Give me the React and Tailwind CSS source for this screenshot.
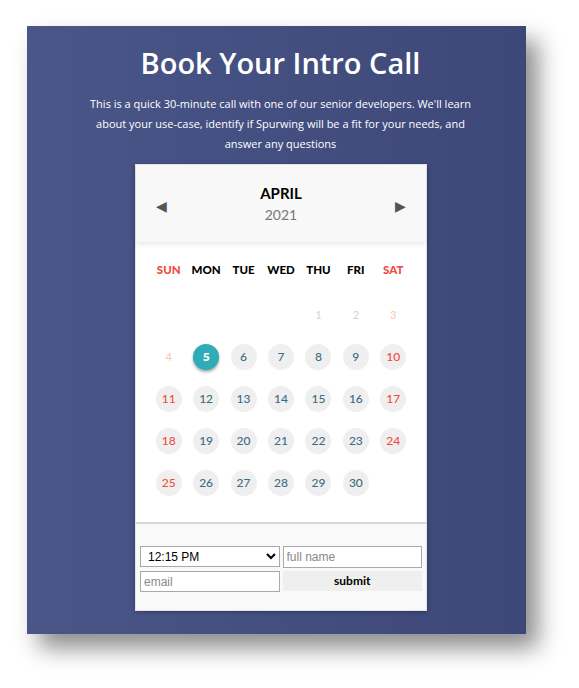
import React, { useState } from "react";

const days = ["SUN", "MON", "TUE", "WED", "THU", "FRI", "SAT"];

export default function App() {
  const [selected, setSelected] = useState(5);

  // April 2021 starts on Thursday
  const cells = [];
  for (let i = 0; i < 4; i++) cells.push(null);
  for (let d = 1; d <= 30; d++) cells.push(d);

  return (
    <div className="min-h-screen w-[579px] h-[688px] bg-white pt-[26px] pl-[27px]">
      <div className="w-[499px] h-[608px] bg-gradient-to-r from-[#4a5688] to-[#3d4878] shadow-[12px_14px_22px_rgba(0,0,0,0.45)] flex flex-col items-center pt-[20px] pl-[8px]">
        <h1 className="font-['Open_Sans',sans-serif] font-semibold text-[29px] leading-[34px] text-white">
          Book Your Intro Call
        </h1>
        <p className="mt-[14px] w-[390px] text-center font-['Open_Sans',sans-serif] text-[11px] leading-[20px] text-white">
          This is a quick 30-minute call with one of our senior developers. We'll learn about your use-case, identify if Spurwing will be a fit for your needs, and answer any questions
        </p>

        <div className="mt-[10px] ml-[1px] w-[292px] h-[447px] bg-white border border-[#e4e4e4] shadow-[0_1px_4px_rgba(0,0,0,0.3)] flex flex-col font-['Lato',sans-serif]">
          <div className="h-[77px] bg-[#f8f8f8] shadow-[0_3px_5px_rgba(0,0,0,0.08)] flex items-center justify-between px-[20px]">
            <button className="text-[#555] text-[14px] leading-none mt-[4px]">◀</button>
            <div className="flex flex-col items-center">
              <span className="font-bold text-[15px] leading-[20px] text-black">APRIL</span>
              <span className="text-[14px] leading-[20px] text-[#777] mt-[2px]">2021</span>
            </div>
            <button className="text-[#555] text-[14px] leading-none mt-[4px]">▶</button>
          </div>

          <div className="px-[14px] pt-[19px]">
            <div className="grid grid-cols-7 h-[16px] items-center">
              {days.map((d, i) => (
                <div
                  key={d}
                  className={`text-center text-[11.5px] font-black ${i === 0 || i === 6 ? "text-[#f24b3b]" : "text-black"}`}
                >
                  {d}
                </div>
              ))}
            </div>

            <div className="grid grid-cols-7 mt-[17px] auto-rows-[42px]">
              {cells.map((d, i) => {
                if (d === null) return <div key={"e" + i} />;
                const col = i % 7;
                const weekend = col === 0 || col === 6;
                if (d < 5) {
                  return (
                    <div key={d} className="flex items-center justify-center">
                      <span className={`text-[11px] ${weekend ? "text-[#f9c6b4]" : "text-[#c4d5de]"}`}>{d}</span>
                    </div>
                  );
                }
                const isSel = d === selected;
                return (
                  <div key={d} className="flex items-center justify-center">
                    <button
                      onClick={() => setSelected(d)}
                      className={`w-[26px] h-[26px] rounded-full flex items-center justify-center text-[12px] ${
                        isSel
                          ? "bg-[#2eacb8] text-white font-extrabold shadow-[0_2px_3px_rgba(0,0,0,0.35)]"
                          : `bg-[#efefef] font-medium ${weekend ? "text-[#f24b3b]" : "text-[#3a6c82]"}`
                      }`}
                    >
                      {d}
                    </button>
                  </div>
                );
              })}
            </div>
          </div>

          <div className="mt-auto h-[88px] border-t-2 border-[#d6d6d6] bg-[#f9f9f9] px-[4px] pt-[22px]">
            <div className="grid grid-cols-2 gap-x-[3px] gap-y-[3px] font-['Liberation_Sans',sans-serif]">
              <select className="h-[21px] border border-[#a9a9a9] bg-white text-[12px] text-black px-[3px]">
                <option>12:15 PM</option>
                <option>12:45 PM</option>
                <option>1:15 PM</option>
              </select>
              <input
                placeholder="full name"
                className="h-[22px] border border-[#a9a9a9] bg-white text-[12px] px-[3px] placeholder:text-[#888]"
              />
              <input
                placeholder="email"
                className="h-[21px] border border-[#a9a9a9] bg-white text-[12px] px-[3px] placeholder:text-[#888]"
              />
              <button className="h-[20px] bg-[#efefef] text-[12px] font-bold text-black font-['Lato',sans-serif]">submit</button>
            </div>
          </div>
        </div>
      </div>
    </div>
  );
}
